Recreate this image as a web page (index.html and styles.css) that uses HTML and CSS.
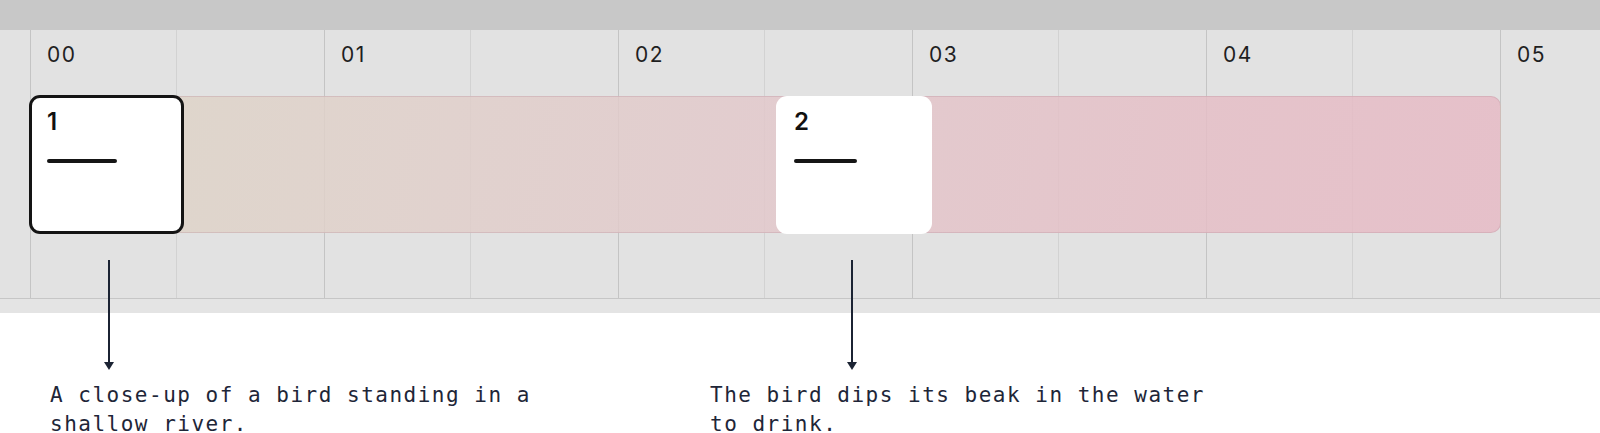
FILE: index.html
```html
<!DOCTYPE html>
<html lang="en">
<head>
<meta charset="utf-8">
<title>Timeline</title>
<link rel="stylesheet" href="styles.css">
</head>
<body>
<div class="stage">
  <div class="topbar"></div>
  <div class="track">
    <div class="grid">
      <div class="half major"><span class="tick">00</span></div>
      <div class="half minor"></div>
      <div class="half major"><span class="tick">01</span></div>
      <div class="half minor"></div>
      <div class="half major"><span class="tick">02</span></div>
      <div class="half minor"></div>
      <div class="half major"><span class="tick">03</span></div>
      <div class="half minor"></div>
      <div class="half major"><span class="tick">04</span></div>
      <div class="half minor"></div>
      <div class="half major last"><span class="tick">05</span></div>
    </div>
    <div class="clip"></div>
    <div class="card card-1">
      <div class="num">1</div>
      <div class="dash"></div>
    </div>
    <div class="card card-2">
      <div class="num">2</div>
      <div class="dash"></div>
    </div>
  </div>
  <div class="scrollstrip"></div>
  <div class="notes">
    <p class="note note-1">A close-up of a bird standing in a shallow river.</p>
    <p class="note note-2">The bird dips its beak in the water to drink.</p>
  </div>
  <div class="arrow arrow-1"></div>
  <div class="arrow arrow-2"></div>
</div>
</body>
</html>
```

FILE: styles.css
```css
html, body {
  margin: 0;
  padding: 0;
  background: #ffffff;
}

body {
  width: 1600px;
  height: 433px;
  overflow: hidden;
}

.stage {
  position: relative;
  width: 1600px;
  height: 433px;
}

.topbar {
  height: 30px;
  background: #c8c8c8;
}

.track {
  position: relative;
  height: 268px;
  background: #e2e2e2;
  border-bottom: 1px solid #c6c6c6;
}

.grid {
  display: flex;
  height: 100%;
  padding-left: 30px;
  box-sizing: border-box;
}

.half {
  flex: none;
  height: 100%;
  box-sizing: border-box;
  border-left: 1px solid #d2d2d2;
}

.half.major {
  width: 146px;
  border-left-color: #c4c4c4;
  padding: 13px 0 0 16px;
}

.half.minor {
  width: 148px;
}

.half.last {
  flex: 1;
}

.tick {
  display: block;
  font-family: Inter, "Noto Sans", sans-serif;
  font-size: 21px;
  line-height: 24px;
  letter-spacing: 1.5px;
  color: #1f1f1f;
}

.clip {
  position: absolute;
  left: 30px;
  top: 66px;
  width: 1471px;
  height: 137px;
  box-sizing: border-box;
  border-radius: 10px;
  border: 1px solid rgba(190, 150, 160, 0.35);
  background: linear-gradient(100deg,
    rgba(220, 213, 198, 0.85) 0%,
    rgba(224, 208, 202, 0.85) 25%,
    rgba(226, 200, 203, 0.85) 50%,
    rgba(229, 190, 198, 0.85) 80%,
    rgba(230, 186, 197, 0.85) 100%);
}

.card {
  position: absolute;
  top: 66px;
  width: 155px;
  height: 138px;
  box-sizing: border-box;
  background: #ffffff;
  border-radius: 11px;
  padding: 11px 0 0 18px;
}

.card-1 {
  left: 29px;
  top: 65px;
  height: 139px;
  border: 3px solid #141414;
  padding: 9px 0 0 15px;
}

.card-2 {
  left: 776px;
  width: 156px;
}

.num {
  font-family: Inter, "Noto Sans", sans-serif;
  font-size: 24px;
  font-weight: 600;
  line-height: 29px;
  color: #111111;
}

.dash {
  margin-top: 23px;
  height: 4px;
  border-radius: 2px;
  background: #151515;
}

.card-1 .dash {
  width: 70px;
}

.card-2 .dash {
  width: 63px;
}

.scrollstrip {
  height: 14px;
  background: #e4e4e4;
}

.notes {
  display: flex;
  gap: 150px;
  padding: 68px 0 0 50px;
}

.note {
  margin: 0;
  width: 510px;
  flex: none;
  font-family: "DejaVu Sans Mono", "Liberation Mono", monospace;
  font-size: 21px;
  line-height: 29px;
  letter-spacing: 1.5px;
  color: #1e2638;
}

.arrow {
  position: absolute;
  top: 260px;
  width: 2px;
  height: 102px;
  background: #1b2333;
}

.arrow::after {
  content: "";
  position: absolute;
  left: -4px;
  top: 102px;
  border-left: 5px solid transparent;
  border-right: 5px solid transparent;
  border-top: 8px solid #1b2333;
}

.arrow-1 {
  left: 108px;
}

.arrow-2 {
  left: 851px;
}
```
